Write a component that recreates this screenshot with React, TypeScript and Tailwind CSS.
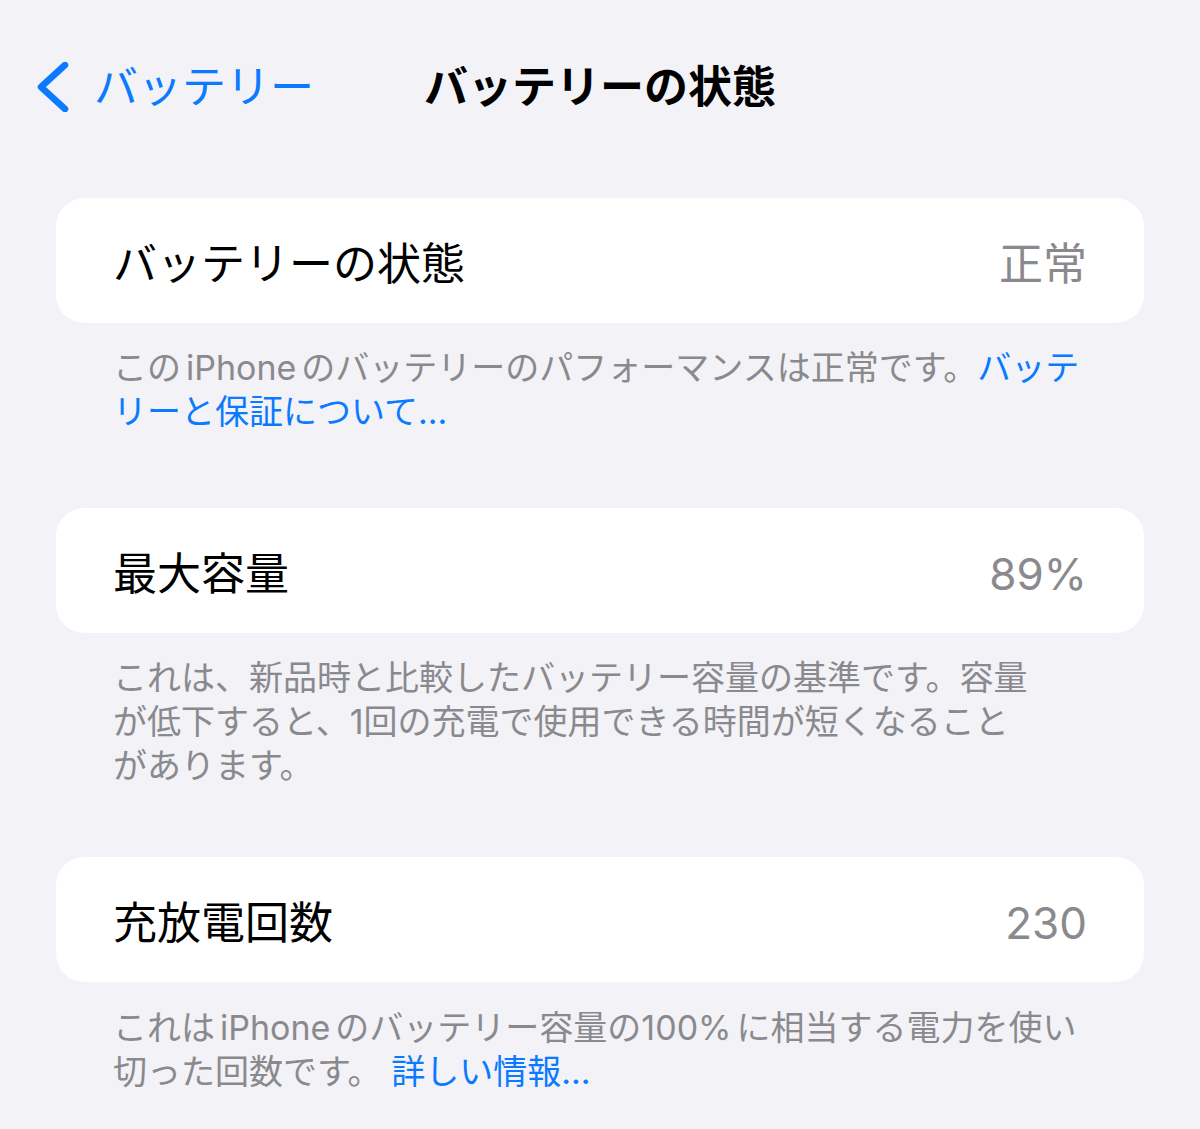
import React from 'react';

const FONT = 'font-["Inter","Noto_Sans_CJK_JP",sans-serif]';

const Row: React.FC<{ label: string; value: string }> = ({ label, value }) => (
  <div className="mx-[56px] h-[125px] rounded-[28px] bg-white px-[57px] pt-[6px] flex items-center justify-between">
    <span className="text-[44px] leading-none text-black">{label}</span>
    <span className="text-[44px] leading-none text-[#8a8a8e]">{value}</span>
  </div>
);

const Footer: React.FC<{ className?: string; children: React.ReactNode }> = ({ className = '', children }) => (
  <p className={`mx-[56px] px-[57px] whitespace-nowrap text-[34px] leading-[44px] text-[#8a8a8e] ${className}`}>
    {children}
  </p>
);

const App: React.FC = () => {
  return (
    <div className={`min-h-[1129px] w-full bg-[#f2f2f7] ${FONT} antialiased`}>
      {/* Nav bar */}
      <div className="pt-[62px] h-[112px] grid grid-cols-[1fr_auto_1fr] items-center">
        <div className="flex items-center h-[50px] pl-[36px] gap-[24px] text-[#0a7aff]">
          <svg width="34" height="50" viewBox="0 0 34 50" fill="none">
            <path d="M29 3 L5 25 L29 47" stroke="currentColor" strokeWidth="6.5" strokeLinecap="round" strokeLinejoin="round" />
          </svg>
          <span className="text-[44px] leading-none">バッテリー</span>
        </div>
        <div className="h-[50px] flex items-center">
          <span className="text-[44px] leading-none font-bold text-black">バッテリーの状態</span>
        </div>
        <div />
      </div>

      <div className="mt-[86px]">
        <Row label="バッテリーの状態" value="正常" />
        <Footer className="pt-[23px] pb-[74px]">
          この<span className="mx-[5px]">iPhone</span>のバッテリーのパフォーマンスは正常です。<span className="text-[#0a7aff]">バッテ<br />リーと保証について...</span>
        </Footer>

        <Row label="最大容量" value="89%" />
        <Footer className="pt-[23px] pb-[69px]">
          これは、新品時と比較したバッテリー容量の基準です。容量<br />
          が低下すると、1回の充電で使用できる時間が短くなること<br />
          があります。
        </Footer>

        <Row label="充放電回数" value="230" />
        <Footer className="pt-[24px]">
          これは<span className="mx-[5px]">iPhone</span>のバッテリー容量の<span className="mr-[5px]">100%</span>に相当する電力を使い<br />
          切った回数です。 <span className="text-[#0a7aff]">詳しい情報...</span>
        </Footer>
      </div>
    </div>
  );
};

export default App;
